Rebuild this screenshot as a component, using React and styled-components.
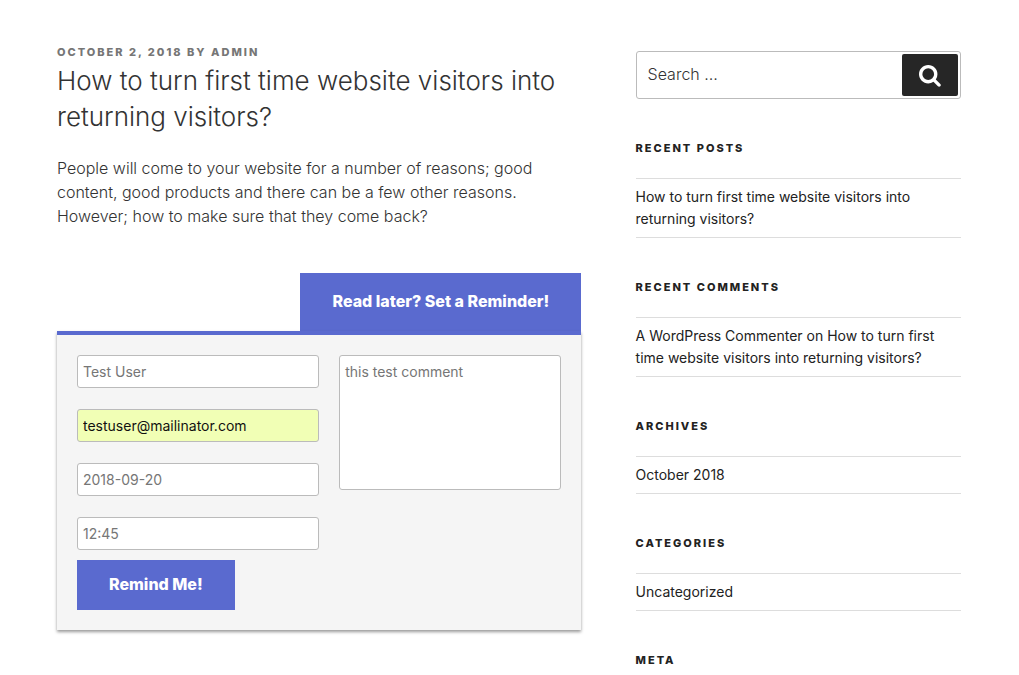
import React from 'react';
import styled, { createGlobalStyle } from 'styled-components';

const GlobalStyle = createGlobalStyle`
  *, *::before, *::after { box-sizing: border-box; }
  body {
    margin: 0;
    background: #fff;
    color: #333;
    font-family: Inter, "Liberation Sans", sans-serif;
    font-size: 16px;
    line-height: 24px;
  }
  input, textarea, button { font-family: inherit; }
`;

const Wrap = styled.div`
  max-width: 1001px;
  margin: 0 auto;
  padding: 43px 49px 0 48px;
  display: flex;
  justify-content: space-between;
  align-items: flex-start;
`;

const Primary = styled.main`
  width: 58%;
`;

const Sidebar = styled.aside`
  width: 36%;
  padding-top: 8px;
  display: flex;
  flex-direction: column;
  gap: 40px;
`;

const EntryMeta = styled.p`
  margin: 0 0 2px;
  color: #767676;
  font-size: 11px;
  font-weight: 800;
  line-height: 18px;
  letter-spacing: 2px;
  text-transform: uppercase;
`;

const EntryTitle = styled.h1`
  margin: 0 0 21px;
  font-size: 26px;
  font-weight: 300;
  line-height: 36px;
`;

const EntryText = styled.p`
  margin: 0 0 45px;
  font-weight: 300;
`;

const PlainLink = styled.a`
  color: inherit;
  text-decoration: none;
`;

const Reminder = styled.section`
  display: flex;
  flex-direction: column;
`;

const ReminderTab = styled.button`
  align-self: flex-end;
  border: 0;
  padding: 16px 32px 18px;
  background: #5a6acf;
  color: #fff;
  font-size: 16px;
  font-weight: 800;
  line-height: 24px;
`;

const ReminderForm = styled.form`
  display: flex;
  gap: 20px;
  align-items: flex-start;
  border-top: 4px solid #5a6acf;
  padding: 20px;
  background: #f5f5f5;
  box-shadow: 0 2px 3px rgba(0, 0, 0, 0.4);
`;

const FieldColumn = styled.div`
  width: 50%;
  display: flex;
  flex-direction: column;
  gap: 21px;
`;

const Field = styled.input`
  width: 100%;
  height: 33px;
  border: 1px solid #bbb;
  border-radius: 3px;
  padding: 0 5px;
  background: ${(p) => (p.$filled ? '#f1ffb5' : '#fff')};
  color: #111;
  font-size: 14px;
  &::placeholder { color: #767676; opacity: 1; }
`;

const CommentField = styled.textarea`
  flex: 1;
  min-width: 0;
  height: 135px;
  border: 1px solid #bbb;
  border-radius: 3px;
  padding: 5px;
  background: #fff;
  color: #111;
  font-size: 14px;
  line-height: 22px;
  resize: none;
  &::placeholder { color: #767676; opacity: 1; }
`;

const LastField = styled.div`
  display: flex;
  flex-direction: column;
  align-items: flex-start;
  gap: 10px;
`;

const SubmitButton = styled.button`
  border: 0;
  padding: 12px 32px 14px;
  background: #5a6acf;
  color: #fff;
  font-size: 16px;
  font-weight: 800;
  line-height: 24px;
`;

const SearchForm = styled.form`
  display: flex;
  height: 48px;
  border: 1px solid #bbb;
  border-radius: 3px;
  padding: 2px;
`;

const SearchInput = styled.input`
  flex: 1;
  min-width: 0;
  border: 0;
  padding: 0 9px 2px;
  background: transparent;
  color: #333;
  font-size: 16px;
  font-weight: 300;
  &::placeholder { color: #333; opacity: 1; }
`;

const SearchButton = styled.button`
  display: flex;
  align-items: center;
  justify-content: center;
  width: 56px;
  border: 0;
  border-radius: 2px;
  padding: 0;
  background: #262626;
  color: #fff;
`;

const WidgetTitle = styled.h2`
  margin: 0 0 21px;
  color: #222;
  font-size: 11px;
  font-weight: 800;
  line-height: 18px;
  letter-spacing: 2px;
  text-transform: uppercase;
`;

const WidgetList = styled.ul`
  margin: 0;
  padding: 0;
  list-style: none;
`;

const WidgetItem = styled.li`
  border: solid #ddd;
  border-width: 1px 0;
  padding: 7px 0;
  color: #222;
  font-size: 14px;
  line-height: 22px;
`;

function SearchIcon() {
  return (
    <svg width="22" height="24" viewBox="0 0 30 32" fill="currentColor" aria-hidden="true">
      <path d="M20.571 14.857q0-3.304-2.348-5.652t-5.652-2.348-5.652 2.348-2.348 5.652 2.348 5.652 5.652 2.348 5.652-2.348 2.348-5.652zM29.714 29.714q0 0.929-0.679 1.607t-1.607 0.679q-0.964 0-1.607-0.679l-6.125-6.107q-3.196 2.214-7.125 2.214-2.554 0-4.884-0.991t-4.018-2.679-2.679-4.018-0.991-4.884 0.991-4.884 2.679-4.018 4.018-2.679 4.884-0.991 4.884 0.991 4.018 2.679 2.679 4.018 0.991 4.884q0 3.929-2.214 7.125l6.125 6.125q0.661 0.661 0.661 1.607z" />
    </svg>
  );
}

function Widget({ title, children }) {
  return (
    <section>
      <WidgetTitle>{title}</WidgetTitle>
      {children && (
        <WidgetList>
          <WidgetItem>{children}</WidgetItem>
        </WidgetList>
      )}
    </section>
  );
}

const postTitle = 'How to turn first time website visitors into returning visitors?';
const keepOnPage = (event) => event.preventDefault();

export default function App() {
  return (
    <>
      <GlobalStyle />
      <Wrap>
        <Primary>
          <article>
            <EntryMeta>
              <PlainLink href="#date">October 2, 2018</PlainLink> by{' '}
              <PlainLink href="#admin">admin</PlainLink>
            </EntryMeta>
            <EntryTitle>{postTitle}</EntryTitle>
            <EntryText>
              People will come to your website for a number of reasons; good content, good products
              and there can be a few other reasons. However; how to make sure that they come back?
            </EntryText>
          </article>
          <Reminder>
            <ReminderTab type="button">Read later? Set a Reminder!</ReminderTab>
            <ReminderForm onSubmit={keepOnPage}>
              <FieldColumn>
                <Field aria-label="Name" placeholder="Test User" />
                <Field
                  $filled
                  type="email"
                  aria-label="Email"
                  defaultValue="testuser@mailinator.com"
                />
                <Field aria-label="Date" placeholder="2018-09-20" />
                <LastField>
                  <Field aria-label="Time" placeholder="12:45" />
                  <SubmitButton type="submit">Remind Me!</SubmitButton>
                </LastField>
              </FieldColumn>
              <CommentField aria-label="Comment" placeholder="this test comment" />
            </ReminderForm>
          </Reminder>
        </Primary>
        <Sidebar>
          <SearchForm role="search" onSubmit={keepOnPage}>
            <SearchInput type="search" aria-label="Search for" placeholder="Search …" />
            <SearchButton type="submit" aria-label="Search">
              <SearchIcon />
            </SearchButton>
          </SearchForm>
          <Widget title="Recent Posts">
            <PlainLink href="#post">{postTitle}</PlainLink>
          </Widget>
          <Widget title="Recent Comments">
            <PlainLink href="#commenter">A WordPress Commenter</PlainLink> on{' '}
            <PlainLink href="#post">{postTitle}</PlainLink>
          </Widget>
          <Widget title="Archives">
            <PlainLink href="#archive">October 2018</PlainLink>
          </Widget>
          <Widget title="Categories">
            <PlainLink href="#category">Uncategorized</PlainLink>
          </Widget>
          <Widget title="Meta" />
        </Sidebar>
      </Wrap>
    </>
  );
}
